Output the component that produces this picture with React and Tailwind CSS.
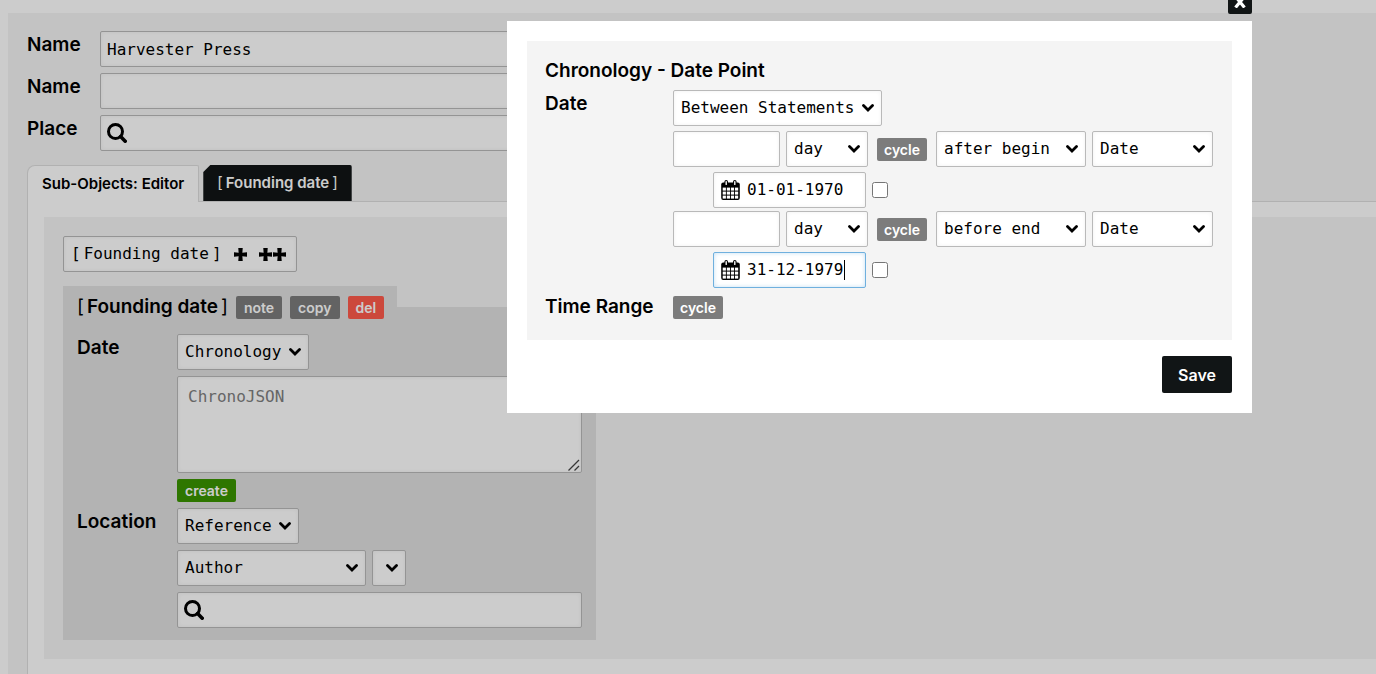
import React, { useState } from 'react';

const fieldBase =
  "h-9 rounded-xs border bg-white text-base text-black font-['DejaVu_Sans_Mono',monospace] focus:outline-none";
const fieldIdle = 'border-[#b9b9b9] shadow-[inset_0_0_4px_rgba(0,0,0,0.06)]';
const fieldActive = 'border-[#6fb0de] shadow-[inset_0_0_4px_rgba(80,160,220,0.35)]';
const labelText = 'text-[19px] leading-7 font-semibold';

const SearchIcon = () => (
  <svg viewBox="0 0 20 20" className="size-5 shrink-0" fill="none" stroke="#000" aria-hidden="true">
    <circle cx="8.5" cy="8.5" r="7" strokeWidth="3" />
    <path d="M13.6 13.6 L18.2 18.2" strokeWidth="3.6" strokeLinecap="round" />
  </svg>
);

const PlusIcon = () => (
  <svg viewBox="0 0 14 14" className="size-[13px]" fill="#000" aria-hidden="true">
    <path d="M4.6 0 H9.4 L9 5.1 L14 4.7 V9.3 L9 8.9 L9.4 14 H4.6 L5 8.9 L0 9.3 V4.7 L5 5.1 Z" />
  </svg>
);

const CalendarIcon = () => (
  <svg viewBox="0 0 19 20" className="h-5 w-[19px] shrink-0" aria-hidden="true">
    <path d="M2.2 2.4 H16.8 Q18.8 2.4 18.8 4.4 V17.8 Q18.8 20 16.8 20 H2.2 Q0.2 20 0.2 17.8 V4.4 Q0.2 2.4 2.2 2.4 Z" fill="#000" />
    <rect x="3.4" y="0" width="3.6" height="6.2" rx="1.8" fill="#000" />
    <rect x="12" y="0" width="3.6" height="6.2" rx="1.8" fill="#000" />
    <rect x="4.5" y="1.1" width="1.4" height="4" rx="0.7" fill="#fff" />
    <rect x="13.1" y="1.1" width="1.4" height="4" rx="0.7" fill="#fff" />
    {[7.6, 11.6, 15.6].map((y) =>
      [1.7, 5.8, 9.9, 14].map((x) => (
        <rect key={`${x}-${y}`} x={x} y={y} width="3.2" height="3" fill="#fff" />
      ))
    )}
  </svg>
);

const Select = ({ id, label, options, className }) => (
  <div className={`relative ${className}`}>
    <select id={id} aria-label={label} className={`${fieldBase} ${fieldIdle} block w-full appearance-none pl-[7px] pr-6`}>
      {options.map((option) => (
        <option key={option}>{option}</option>
      ))}
    </select>
    <svg
      viewBox="0 0 12 8"
      className="pointer-events-none absolute right-2 top-[14px] h-2 w-3"
      fill="none"
      stroke="#000"
      strokeWidth="2.8"
      strokeLinecap="round"
      aria-hidden="true"
    >
      <path d="M1.5 1.6 L6 6 L10.5 1.6" />
    </svg>
  </div>
);

const Badge = ({ children, className = 'px-2 bg-[#7c7c7c]' }) => (
  <button
    type="button"
    className={`h-[23px] cursor-pointer rounded-xs text-sm leading-[23px] font-semibold text-white ${className}`}
  >
    {children}
  </button>
);

const CycleBadge = () => <Badge className="w-[50px] bg-[#7c7c7c]">cycle</Badge>;

// Object names are wrapped in light brackets
const Bracketed = ({ children }) => (
  <span className="inline-flex gap-[3px] whitespace-nowrap">
    <span className="font-normal">[</span>
    {children}
    <span className="font-normal">]</span>
  </span>
);

const SearchField = ({ id, label, className }) => (
  <div className={`${fieldBase} ${fieldIdle} flex items-center gap-2 px-1.5 ${className}`}>
    <SearchIcon />
    <input id={id} aria-label={label} type="text" className="min-w-0 flex-1 focus:outline-none" />
  </div>
);

const Statement = ({ relation, date, active }) => {
  const [value, setValue] = useState(date);

  return (
    <div className="flex flex-col gap-[5px]">
      <div className="flex gap-1.5">
        <input type="text" aria-label="Amount" className={`${fieldBase} ${fieldIdle} w-[107px] px-[7px]`} />
        <Select label="Unit" options={['day', 'month', 'year']} className="w-[82px]" />
        <div className="mx-[3px] flex items-center">
          <CycleBadge />
        </div>
        <Select label="Relation" options={[relation]} className="w-[150px]" />
        <Select label="Source" options={['Date']} className="w-[121px]" />
      </div>
      <div className="ml-10 flex items-center gap-1.5">
        <div className={`${fieldBase} ${active ? fieldActive : fieldIdle} flex w-[153px] items-center pl-[7px]`}>
          <CalendarIcon />
          <input
            type="text"
            aria-label="Date value"
            value={value}
            onChange={(e) => setValue(e.target.value)}
            className="ml-[7px] w-[97px] focus:outline-none"
          />
          {active && <span className="h-5 w-px bg-black" />}
        </div>
        <input type="checkbox" aria-label="Use date" className="size-4" />
      </div>
    </div>
  );
};

const DatePointDialog = () => (
  <div role="dialog" aria-labelledby="dialog-title" className="absolute top-[21px] right-[124px] bg-white p-5">
    <button
      type="button"
      aria-label="Close"
      className="absolute -top-[31px] right-0 flex size-6 items-center justify-center rounded-xs bg-[#111516]"
    >
      <svg viewBox="0 0 12 12" className="size-3" stroke="#fff" strokeWidth="3.2" aria-hidden="true">
        <path d="M1.5 0.5 L10.5 11.5 M10.5 0.5 L1.5 11.5" />
      </svg>
    </button>

    <div className="flex flex-col gap-[5px] bg-[#f4f4f4] pt-4 pr-[19px] pb-[19px] pl-[18px]">
      <h2 id="dialog-title" className={labelText}>
        Chronology - Date Point
      </h2>
      <div className="flex">
        <label htmlFor="point-type" className={`w-32 ${labelText}`}>
          Date
        </label>
        <div className="flex flex-col gap-[5px]">
          <Select id="point-type" options={['Between Statements']} className="w-[209px]" />
          <div className="flex flex-col gap-[3px]">
            <Statement relation="after begin" date="01-01-1970" />
            <Statement relation="before end" date="31-12-1979" active />
          </div>
        </div>
      </div>
      <div className="flex items-center">
        <span className={`w-32 ${labelText}`}>Time Range</span>
        <CycleBadge />
      </div>
    </div>

    <div className="mt-4 flex justify-end">
      <button type="button" className="h-[37px] rounded-xs bg-[#111516] px-4 text-base font-semibold text-white">
        Save
      </button>
    </div>
  </div>
);

const SubObject = () => (
  <section className="w-[533px] bg-[#e0e0e0] px-3.5 pt-[7px] pb-3 [clip-path:polygon(0_0,334px_0,334px_21px,100%_21px,100%_100%,0_100%)]">
    <div className="flex items-center gap-2">
      <h3 className={labelText}>
        <Bracketed>Founding date</Bracketed>
      </h3>
      <Badge>note</Badge>
      <Badge>copy</Badge>
      <Badge className="bg-[#ff5a4c] px-2">del</Badge>
    </div>

    <div className="mt-[13px] flex flex-col gap-1.5">
      <div className="flex">
        <label htmlFor="date-type" className={`w-[100px] ${labelText}`}>
          Date
        </label>
        <div className="flex flex-1 flex-col items-start gap-1.5">
          <Select id="date-type" options={['Chronology']} className="w-[132px]" />
          <div className="relative w-full">
            <textarea
              aria-label="ChronoJSON"
              placeholder="ChronoJSON"
              className={`${fieldBase} ${fieldIdle} block h-[97px] w-full resize-none px-2.5 py-2 placeholder:text-[#808080]`}
            />
            <svg
              viewBox="0 0 12 12"
              className="pointer-events-none absolute right-0.5 bottom-0.5 size-3"
              stroke="#444"
              strokeWidth="1.3"
              aria-hidden="true"
            >
              <path d="M0.5 11.5 L11 1 M6.5 11.5 L11 7" />
            </svg>
          </div>
          <Badge className="bg-[#3a9400] px-2">create</Badge>
        </div>
      </div>
      <div className="flex">
        <label htmlFor="location-type" className={`w-[100px] ${labelText}`}>
          Location
        </label>
        <div className="flex flex-1 flex-col gap-1.5">
          <Select id="location-type" options={['Reference']} className="w-[122px]" />
          <div className="flex gap-1.5">
            <Select label="Type" options={['Author']} className="w-[189px]" />
            <Select label="Sub-object" options={['']} className="w-[34px]" />
          </div>
          <SearchField label="Location object" className="w-full" />
        </div>
      </div>
    </div>
  </section>
);

const App = () => {
  const [name, setName] = useState('Harvester Press');

  return (
    <div className="relative flex min-h-screen flex-col overflow-hidden bg-white pt-[13px] pl-2 font-['Inter',sans-serif] text-black">
      <main className="flex flex-1 flex-col bg-[#f4f4f4] pt-[18px] pl-[19px]">
        <div className="flex max-w-[900px] flex-col gap-1.5">
          <div className="flex">
            <label htmlFor="name-1" className={`w-[73px] ${labelText}`}>Name</label>
            <input
              id="name-1"
              type="text"
              value={name}
              onChange={(e) => setName(e.target.value)}
              className={`${fieldBase} ${fieldIdle} flex-1 px-1.5`}
            />
          </div>
          <div className="flex">
            <label htmlFor="name-2" className={`w-[73px] ${labelText}`}>Name</label>
            <input id="name-2" type="text" className={`${fieldBase} ${fieldIdle} flex-1 px-1.5`} />
          </div>
          <div className="flex">
            <label htmlFor="place" className={`w-[73px] ${labelText}`}>Place</label>
            <SearchField id="place" className="flex-1" />
          </div>
        </div>

        {/* Tabs */}
        <div className="mt-3.5 flex gap-1">
          <button
            type="button"
            className="relative -mb-px h-[37px] rounded-tl-lg rounded-tr-xs border border-b-0 border-[#dedede] bg-white px-3.5 text-[15px] font-semibold"
          >
            Sub-Objects: Editor
          </button>
          <button
            type="button"
            className="h-9 rounded-tr-xs bg-[#111516] px-3.5 text-[15px] font-semibold text-white [clip-path:polygon(0_7px,7px_0,100%_0,100%_100%,0_100%)]"
          >
            <Bracketed>Founding date</Bracketed>
          </button>
        </div>

        <div className="flex-1 border-t border-l border-[#dedede] bg-white pt-[15px] pb-[15px] pl-4">
          <div className="flex flex-col items-start gap-3.5 bg-[#f4f4f4] py-[19px] pl-[19px]">
            <div className={`${fieldBase} ${fieldIdle} flex items-center pr-2.5 pl-[7px]`}>
              <Bracketed>Founding date</Bracketed>
              <button type="button" aria-label="Add one" className="ml-3">
                <PlusIcon />
              </button>
              <button type="button" aria-label="Add multiple" className="ml-3 flex gap-px">
                <PlusIcon />
                <PlusIcon />
              </button>
            </div>
            <SubObject />
          </div>
        </div>
      </main>

      <div className="absolute inset-0 bg-black/20">
        <DatePointDialog />
      </div>
    </div>
  );
};

export default App;
